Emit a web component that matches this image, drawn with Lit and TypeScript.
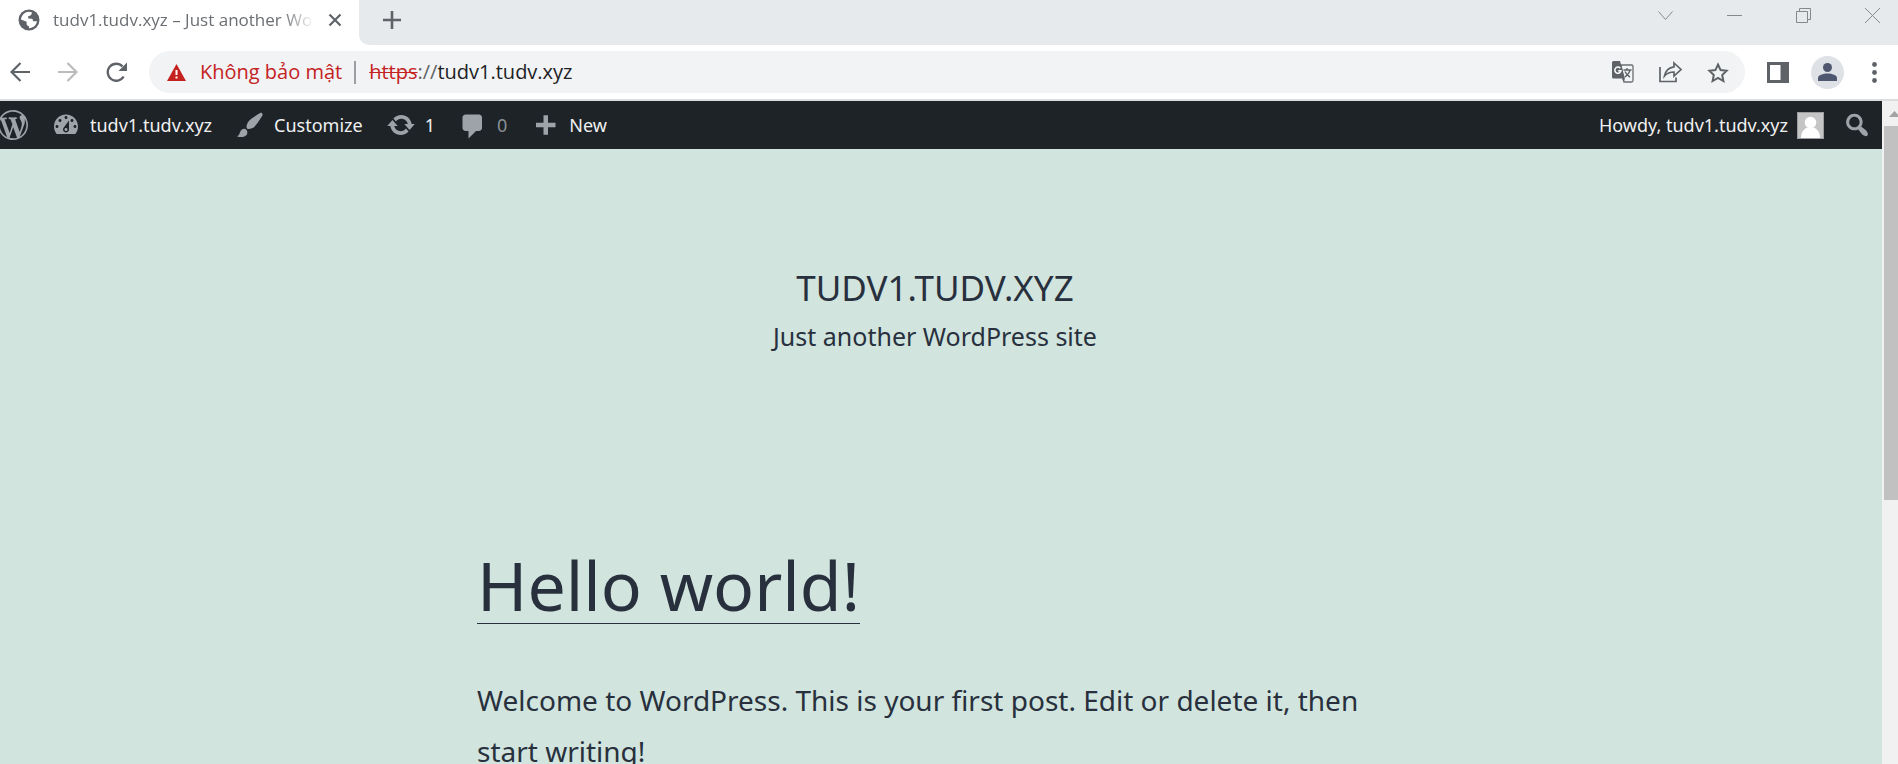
import { LitElement, html, css, svg } from "lit";
import { customElement } from "lit/decorators.js";

const dash = (d: string) => html`<svg class="dash" viewBox="0 0 20 20" aria-hidden="true">${svg`<path fill-rule="evenodd" d=${d} />`}</svg>`;

const ICONS = {
  wordpress:
    "M20 10c0-5.51-4.49-10-10-10C4.48 0 0 4.49 0 10c0 5.52 4.48 10 10 10 5.51 0 10-4.48 10-10zM7.78 15.37L4.37 6.22c.55-.02 1.17-.08 1.17-.08.5-.06.44-1.13-.06-1.11 0 0-1.45.11-2.37.11-.18 0-.37 0-.58-.01C4.12 2.69 6.87 1.11 10 1.11c2.33 0 4.45.87 6.05 2.34-.68-.11-1.65.39-1.65 1.58 0 .74.45 1.36.9 2.1.35.61.55 1.36.55 2.46 0 1.49-1.4 5-1.4 5l-3.03-8.37c.54-.02.82-.17.82-.17.5-.05.44-1.25-.06-1.22 0 0-1.44.12-2.38.12-.87 0-2.33-.12-2.33-.12-.5-.03-.56 1.2-.06 1.22l.92.08 1.26 3.41zM17.41 10c.24-.64.74-1.87.43-4.25.7 1.29 1.05 2.71 1.05 4.25 0 3.29-1.73 6.24-4.4 7.78.97-2.59 1.94-5.2 2.92-7.78zM6.1 18.09C3.12 16.65 1.11 13.53 1.11 10c0-1.3.23-2.48.72-3.59C3.25 10.3 4.67 14.2 6.1 18.09zm4.03-6.63l2.58 6.98c-.86.29-1.76.45-2.71.45-.79 0-1.57-.11-2.29-.33.81-2.38 1.62-4.74 2.42-7.1z",
  dashboard:
    "M3.76 16h12.48c1.1-1.37 1.76-3.11 1.76-5 0-4.42-3.58-8-8-8s-8 3.58-8 8c0 1.89.66 3.63 1.76 5zM10 4c.55 0 1 .45 1 1s-.45 1-1 1-1-.45-1-1 .45-1 1-1zM6 6c.55 0 1 .45 1 1s-.45 1-1 1-1-.45-1-1 .45-1 1-1zm8 0c.55 0 1 .45 1 1s-.45 1-1 1-1-.45-1-1 .45-1 1-1zm-5.37 5.55L12 7v6c0 1.1-.9 2-2 2s-2-.9-2-2c0-.57.24-1.08.63-1.45zM4 10c.55 0 1 .45 1 1s-.45 1-1 1-1-.45-1-1 .45-1 1-1zm12 0c.55 0 1 .45 1 1s-.45 1-1 1-1-.45-1-1 .45-1 1-1zm-5 3c0-.55-.45-1-1-1s-1 .45-1 1 .45 1 1 1 1-.45 1-1z",
  brush:
    "M18.33 3.57s.27-.8-.31-1.36c-.53-.52-1.22-.24-1.22-.24-.61.3-5.76 3.47-7.67 5.57-.86.96-2.06 3.79-1.09 4.82.92.98 3.96-.17 4.79-1 2.06-2.06 5.21-7.17 5.5-7.79zM1.4 17.65c2.37-1.56 1.46-3.41 3.23-4.64.93-.65 2.22-.62 3.08.29.63.67.8 2.57-.16 3.46-1.57 1.45-4 1.55-6.15.89z",
  update:
    "M10.2 3.28c3.53 0 6.43 2.61 6.92 6h2.08l-3.5 4-3.5-4h2.32c-.45-1.97-2.21-3.45-4.32-3.45-1.45 0-2.73.71-3.54 1.78L4.95 5.66C6.23 4.2 8.11 3.28 10.2 3.28zm-.4 13.44c-3.52 0-6.43-2.61-6.92-6H.8l3.5-4c1.17 1.33 2.33 2.67 3.5 4H5.48c.45 1.97 2.21 3.45 4.32 3.45 1.45 0 2.73-.71 3.54-1.78l1.71 1.95c-1.28 1.46-3.15 2.38-5.25 2.38z",
  comment: "M5 3h9c1.1 0 2 .9 2 2v7c0 1.1-.9 2-2 2h-2l-5 5v-5H5c-1.1 0-2-.9-2-2V5c0-1.1.9-2 2-2z",
  plus: "M17 8.500v3h-5v5H9v-5H4v-3h5v-5h3v5z",
  search:
    "M12.14 4.18c1.87 1.87 2.11 4.75.72 6.89.12.1.22.21.36.31.2.16.47.36.81.59.34.24.56.39.66.47.42.31.73.57.94.78.32.32.6.65.84 1 .25.35.44.69.59 1.04.14.35.21.68.18 1-.02.32-.14.59-.36.81s-.49.34-.81.36c-.31.02-.65-.04-.99-.19-.35-.14-.7-.34-1.04-.59-.35-.24-.68-.52-1-.84-.21-.21-.47-.52-.77-.93-.1-.13-.25-.35-.47-.66-.22-.32-.4-.57-.56-.78-.16-.2-.29-.35-.44-.5-2.07 1.09-4.69.76-6.44-.98-2.14-2.15-2.14-5.64 0-7.78 2.15-2.15 5.63-2.15 7.78 0zm-1.41 6.36c1.36-1.37 1.36-3.58 0-4.95-1.37-1.37-3.59-1.37-4.95 0-1.37 1.37-1.37 3.58 0 4.95 1.36 1.37 3.58 1.37 4.95 0z",
};

const reset = css`
  * { box-sizing: border-box; margin: 0; }
  svg { display: block; flex: none; }
  a { color: inherit; text-decoration: none; }
  button { border: 0; padding: 0; background: none; color: inherit; font: inherit; display: grid; place-items: center; flex: none; }
`;

@customElement("browser-tabs")
class BrowserTabs extends LitElement {
  static styles = [
    reset,
    css`
      :host { display: flex; height: 45px; background: #fff; color: #5f6368; }
      .tab { display: flex; align-items: center; width: 359px; padding: 0 17px 6px 18px; }
      .title { flex: 1; margin: 0 14px 0 13px; overflow: hidden; white-space: nowrap; font-size: 17px; line-height: 24px; color: #6b6f73;
        mask-image: linear-gradient(to right, #000 88%, transparent); }
      .strip { flex: 1; display: flex; background: #e6eaed; border-radius: 0 0 0 10px; }
      .new { width: 24px; height: 39px; margin-left: 21px; }
      .win { display: flex; margin-left: auto; height: 31px; gap: 44px; padding-right: 13px; color: #85898c; }
      .win button { width: 25px; }
    `,
  ];
  render() {
    return html`
      <div class="tab">
        <svg width="22" height="22" viewBox="0 0 22 22"><circle cx="11" cy="11" r="10.5" fill="#5f6368" /><path d="M10.500 2.800L13.800 3.200C13.900 5 13.200 6.200 11.800 6.700L10.200 7.300V9.600L13.600 9.800C14.800 10 15 11 15 12.300H19C18.300 16.300 15.200 19 11 19.200V17.200C9.500 17 8.500 16 8.600 14.500V12.800L3 10.500C3.300 6.500 6.400 3.300 10.500 2.800Z" fill="#fff" /></svg>
        <span class="title">tudv1.tudv.xyz – Just another WordPress site</span>
        <button aria-label="Close tab"><svg width="14" height="14" viewBox="0 0 14 14" stroke="#5f6368" stroke-width="2.2"><path d="M1.5 1.5l11 11M12.5 1.5l-11 11" /></svg></button>
      </div>
      <div class="strip">
        <button class="new" aria-label="New tab"><svg width="18" height="18" viewBox="0 0 18 18" stroke="#5f6368" stroke-width="2.6"><path d="M9 0v18M0 9h18" /></svg></button>
        <div class="win">
          <button aria-label="Search tabs"><svg width="15" height="15" viewBox="0 0 15 15" fill="none" stroke="currentColor"><path d="M.5 3.5l7 8 7-8" /></svg></button>
          <button aria-label="Minimize"><svg width="15" height="15" viewBox="0 0 15 15" stroke="currentColor"><path d="M0 7.5h15" /></svg></button>
          <button aria-label="Restore"><svg width="15" height="15" viewBox="0 0 15 15" fill="none" stroke="currentColor"><path d="M.5 3.5h11v11H.5zM3.5 3.5V.5h11v11h-3" /></svg></button>
          <button aria-label="Close"><svg width="15" height="15" viewBox="0 0 15 15" stroke="currentColor"><path d="M0 0l15 15M15 0L0 15" /></svg></button>
        </div>
      </div>
    `;
  }
}

@customElement("browser-toolbar")
class BrowserToolbar extends LitElement {
  static styles = [
    reset,
    css`
      :host { display: flex; align-items: center; height: 56px; padding: 0 21px 0 10px; background: #fff; border-bottom: 2px solid #dcdddf; color: #5f6368; }
      .nav { display: flex; gap: 28px; margin-right: 23px; }
      .nav button { width: 20px; }
      .box { flex: 1; display: flex; align-items: center; height: 42px; border-radius: 21px; background: #f1f3f4; padding: 0 16px 0 18px; font-size: 20px; line-height: 28px; white-space: nowrap; }
      .warn { margin: 0 12px 0 14px; color: #c5221f; }
      .sep { width: 2px; height: 23px; margin-right: 13px; background: #9b9fa3; }
      .warn, .sec { flex: none; }
      s { color: #c5221f; text-decoration-thickness: 1px; }
      input { flex: 1; min-width: 0; height: 28px; border: 0; padding: 0; background: none; font: inherit; color: #202124; outline: 0; }
      .acts { display: flex; gap: 25px; }
      .right { display: flex; align-items: center; gap: 22px; margin-left: 22px; }
      .me { width: 33px; height: 33px; border-radius: 50%; background: #dee1e6; }
      .dots { width: 5px; margin-left: 6px; }
    `,
  ];
  render() {
    return html`
      <div class="nav">
        <button aria-label="Back"><svg width="20" height="20" viewBox="0 0 20 20" fill="none" stroke="#5f6368" stroke-width="2.2"><path d="M20 10H2M10.500 1L1.500 10l9 9" /></svg></button>
        <button aria-label="Forward"><svg width="20" height="20" viewBox="0 0 20 20" fill="none" stroke="#babcbe" stroke-width="2.2"><path d="M0 10h18M9.500 1l9 9-9 9" /></svg></button>
        <button aria-label="Reload"><svg width="21" height="21" viewBox="0 0 21 21" fill="none"><path d="M17.600 14.500A8.500 8.500 0 1 1 16.500 4.500" stroke="#5f6368" stroke-width="2.300" /><path d="M21 .5V9h-8.500z" fill="#5f6368" /></svg></button>
      </div>
      <div class="box">
        <svg class="sec" width="19" height="17" viewBox="0 0 19 17"><path d="M9.500 0L19 17H0z" fill="#c5221f" /><path d="M8.500 6h2v5h-2zM8.500 12.500h2v2h-2z" fill="#fff" /></svg>
        <label class="warn" for="url">Không bảo mật</label>
        <span class="sep"></span>
        <span><s>https</s>://</span>
        <input id="url" value="tudv1.tudv.xyz" />
        <div class="acts">
          <button aria-label="Translate"><svg width="22" height="22" viewBox="0 0 22 22" fill="none"><path d="M9 4h10.500a1.500 1.500 0 0 1 1.500 1.500v14a1.500 1.500 0 0 1-1.500 1.500H12z" stroke="#6b6f73" stroke-width="1.300" /><path d="M1.500 0H8l5 17.500H1.500A1.500 1.500 0 0 1 0 16V1.500A1.500 1.500 0 0 1 1.500 0z" fill="#5f6368" /><path d="M8.300 7.200A3.100 3.100 0 1 0 9 9.700H6.200" stroke="#fff" stroke-width="1.500" /><path d="M11.500 9h8M15 7v2M18 9c-.5 3-3 5.500-5 7M13 10.500c1 2.500 3 4.500 5 5.500" stroke="#5f6368" stroke-width="1.400" /><path d="M10 17.500h3L11.500 21z" fill="#5f6368" /></svg></button>
          <button aria-label="Share"><svg width="23" height="22" viewBox="0 0 23 22" fill="none" stroke="#5f6368" stroke-width="1.700"><path d="M1 6v14.500h16V16.500" /><path d="M15 2l7 6.500-7 6.500v-4c-4 0-7 1.200-9.500 4C6.500 10 9.500 6.500 15 5.800z" /></svg></button>
          <button aria-label="Bookmark"><svg width="22" height="21" viewBox="0 0 22 21" fill="none" stroke="#5f6368" stroke-width="2"><path d="M11 2.500l2.600 5.600 6 .7-4.400 4.200 1.200 6L11 16l-5.400 3 1.200-6-4.400-4.200 6-.7z" /></svg></button>
        </div>
      </div>
      <div class="right">
        <button aria-label="Side panel"><svg width="22" height="21" viewBox="0 0 22 21"><path fill-rule="evenodd" d="M0 0h22v21H0zM3 3v15h10.500V3z" fill="#5f6368" /></svg></button>
        <button class="me" aria-label="Profile"><svg width="19" height="18" viewBox="0 0 19 18" fill="#4d5870"><circle cx="9.500" cy="4.500" r="4.500" /><path d="M0 18v-3c0-3 5-4.500 9.500-4.500S19 12 19 15v3z" /></svg></button>
        <button class="dots" aria-label="Menu"><svg width="5" height="21" viewBox="0 0 5 21" fill="#5f6368"><circle cx="2.500" cy="2.500" r="2.400" /><circle cx="2.500" cy="10.500" r="2.400" /><circle cx="2.500" cy="18.500" r="2.400" /></svg></button>
      </div>
    `;
  }
}

@customElement("admin-bar")
class AdminBar extends LitElement {
  static styles = [
    reset,
    css`
      :host { display: flex; align-items: center; justify-content: space-between; height: 48px; background: #1d2327; color: #f0f0f1; font-size: 18px; line-height: 48px; white-space: nowrap; padding-right: 10px; }
      nav { display: flex; align-items: center; gap: 23px; }
      .start { margin-left: -2px; }
      a { display: flex; align-items: center; gap: 9px; }
      .dash { width: 30px; height: 30px; fill: #9ea3a9; }
      .zero { color: #8b9095; }
      .end { gap: 18px; }
    `,
  ];
  render() {
    return html`
      <nav class="start">
        <a href="#wp" aria-label="About WordPress">${dash(ICONS.wordpress)}</a>
        <a href="#site">${dash(ICONS.dashboard)}<span>tudv1.tudv.xyz</span></a>
        <a href="#customize">${dash(ICONS.brush)}<span>Customize</span></a>
        <a href="#updates">${dash(ICONS.update)}<span>1</span></a>
        <a href="#comments">${dash(ICONS.comment)}<span class="zero">0</span></a>
        <a href="#new">${dash(ICONS.plus)}<span>New</span></a>
      </nav>
      <nav class="end">
        <a href="#profile"><span>Howdy, tudv1.tudv.xyz</span>
          <svg width="27" height="27" viewBox="0 0 27 27"><path fill="#9b9da0" d="M0 0h27v27H0z" /><path fill="#c5c5c5" d="M1 1h25v25H1z" /><circle cx="13.500" cy="10.500" r="5.800" fill="#fff" /><path d="M4 26c0-6 3-9 6-10.500h7c3 1.500 6 4.500 6 10.500z" fill="#fff" /></svg></a>
        <button aria-label="Search">${dash(ICONS.search)}</button>
      </nav>
    `;
  }
}

@customElement("app-root")
class AppRoot extends LitElement {
  static styles = [
    reset,
    css`
      :host { display: flex; flex-direction: column; height: 100vh; overflow: hidden; font-family: "Open Sans", "Noto Sans", sans-serif; background: #fff; }
      browser-tabs, browser-toolbar, admin-bar { flex: none; }
      .view { flex: 1; min-height: 0; display: flex; }
      .page { flex: 1; min-width: 0; overflow: hidden; background: #d1e4dd; color: #28303d; font-family: "Noto Sans", "Open Sans", sans-serif; }
      .inner { padding: 114px 12px 0 0; }
      header { text-align: center; }
      .name { font-size: 35px; line-height: 50px; font-weight: 400; text-transform: uppercase; }
      .desc { font-size: 25px; line-height: 46px; }
      article { max-width: 916px; margin: 172px auto 0; }
      h2 { font-size: 68px; line-height: 108px; font-weight: 400; margin-bottom: 51px; display: flex; }
      h2 a { border-bottom: 1px solid #28303d; height: 93px; }
      p { font-size: 28px; line-height: 51px; }
      .bar { flex: none; width: 16px; overflow: hidden; background: #f1f1f1; display: flex; flex-direction: column; padding-left: 2px; }
      .bar svg { margin: 10px 0 9px 5px; }
      .thumb { height: 56.4%; background: #c1c1c1; }
    `,
  ];
  render() {
    return html`
      <browser-tabs></browser-tabs>
      <browser-toolbar></browser-toolbar>
      <div class="view">
        <div class="page">
          <admin-bar></admin-bar>
          <div class="inner">
            <header>
              <h1 class="name">tudv1.tudv.xyz</h1>
              <p class="desc">Just another WordPress site</p>
            </header>
            <article>
              <h2><a href="#hello">Hello world!</a></h2>
              <p>Welcome to WordPress. This is your first post. Edit or delete it, then start writing!</p>
            </article>
          </div>
        </div>
        <div class="bar">
          <svg width="11" height="6" viewBox="0 0 11 6"><path d="M5.500 0L11 6H0z" fill="#a3a3a3" /></svg>
          <div class="thumb"></div>
        </div>
      </div>
    `;
  }
}
